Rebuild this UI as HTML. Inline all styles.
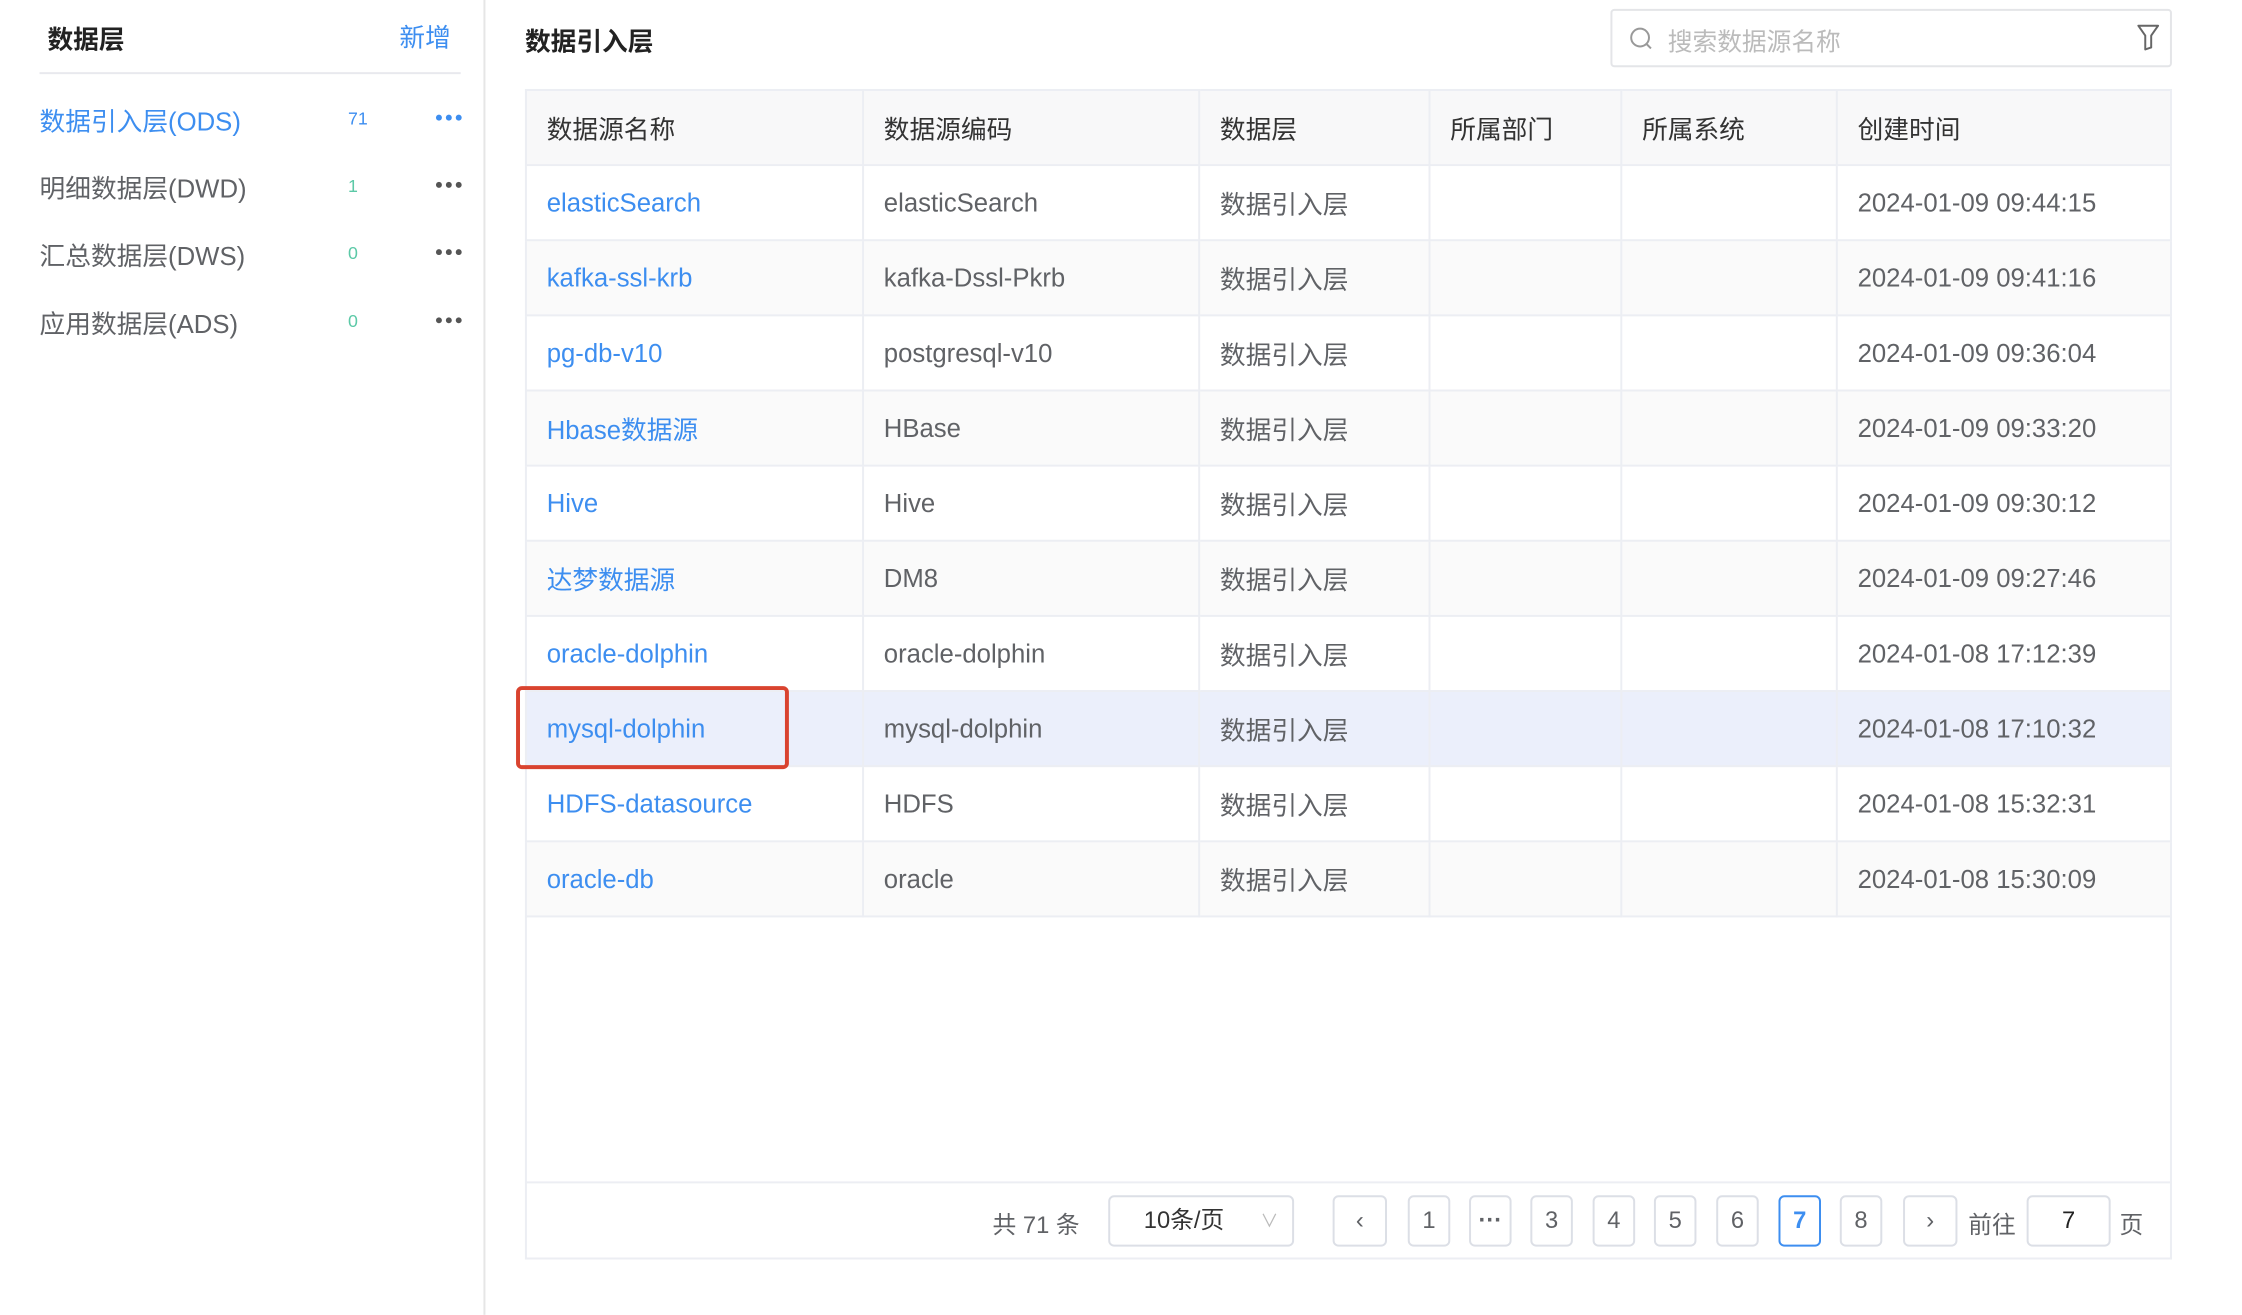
<!DOCTYPE html>
<html><head><meta charset="utf-8"><style>
*{box-sizing:border-box;margin:0;padding:0}
body{width:2242px;height:1310px;background:#fff;font-family:"Liberation Sans","Noto Sans CJK SC",sans-serif;position:relative;overflow:hidden;color:#606266}
#w{position:absolute;left:0;top:0;width:2268px;height:1330px;transform:scale(0.9886);transform-origin:0 0}
.abs{position:absolute}
.side-title{left:48px;top:20px;font-size:26px;font-weight:bold;color:#222}
.add{left:404px;top:18px;font-size:26px;color:#3d8ef0}
.sdiv{left:40px;top:73px;width:426px;height:2px;background:#e8e9ee}
.vdiv{left:489px;top:0;width:2px;height:1330px;background:#e6e6e6}
.item{left:40px;font-size:26px;color:#606266}
.cnt{left:352px;font-size:18px;color:#5cc9a7}
.dots{left:441px;width:26px;height:6px}
.dots i{position:absolute;top:0;width:6px;height:6px;border-radius:50%;background:#555}
.title{left:531px;top:22px;font-size:26px;font-weight:bold;color:#222}
.search{left:1629px;top:9px;width:568px;height:59px;border:2px solid #e4e5e8;border-radius:4px}
table{position:absolute;left:531px;top:90px;width:1666px;border-collapse:collapse;font-size:26px}
td,th{height:76px;border:2px solid #eceef3;padding-left:20px;text-align:left;font-weight:normal;white-space:nowrap}
th{background:#f8f8f9;color:#333}
tr.g td{background:#fafafa}
tr.h td{background:#ebeffb}
td a{color:#3d8ef0;text-decoration:none}
.frame{left:531px;top:926px;width:1666px;height:348px;border:2px solid #eceef3;border-top:none}
.pline{left:531px;top:1195px;width:1666px;height:2px;background:#eceef3}
.pb{top:1209px;height:52px;border:2px solid #dcdfe6;border-radius:6px;font-size:24px;color:#606266;text-align:center;line-height:48px}
.pt{top:1219px;font-size:24px;color:#606266}
</style></head><body><div id="w">
<div class="abs side-title">数据层</div>
<div class="abs add">新增</div>
<div class="abs sdiv"></div>
<div class="abs item" style="top:103px;color:#3d8ef0">数据引入层(ODS)</div>
<div class="abs cnt" style="top:110px;color:#3d8ef0">71</div>
<div class="abs dots" style="top:116px"><i style="left:0;background:#3d8ef0"></i><i style="left:10px;background:#3d8ef0"></i><i style="left:20px;background:#3d8ef0"></i></div>
<div class="abs item" style="top:171px">明细数据层(DWD)</div>
<div class="abs cnt" style="top:178px">1</div>
<div class="abs dots" style="top:184px"><i style="left:0"></i><i style="left:10px"></i><i style="left:20px"></i></div>
<div class="abs item" style="top:239px">汇总数据层(DWS)</div>
<div class="abs cnt" style="top:246px">0</div>
<div class="abs dots" style="top:252px"><i style="left:0"></i><i style="left:10px"></i><i style="left:20px"></i></div>
<div class="abs item" style="top:308px">应用数据层(ADS)</div>
<div class="abs cnt" style="top:315px">0</div>
<div class="abs dots" style="top:321px"><i style="left:0"></i><i style="left:10px"></i><i style="left:20px"></i></div>
<div class="abs vdiv"></div>

<div class="abs title">数据引入层</div>
<div class="abs search">
<svg class="abs" style="left:16px;top:16px" width="26" height="26" viewBox="0 0 26 26"><circle cx="12" cy="11" r="9" fill="none" stroke="#999" stroke-width="2"/><path d="M18 17l5 5" stroke="#999" stroke-width="2"/></svg>
<div class="abs" style="left:56px;top:12px;font-size:25px;color:#bbb">搜索数据源名称</div>
<svg class="abs" style="left:530px;top:12px" width="24" height="30" viewBox="0 0 24 30"><path d="M2 3h20l-7 10v12l-6 2V13z" fill="none" stroke="#666" stroke-width="2" stroke-linejoin="round"/></svg>
</div>

<table>
<tr><th style="width:341px">数据源名称</th><th style="width:340px">数据源编码</th><th style="width:233px">数据层</th><th style="width:194px">所属部门</th><th style="width:218px">所属系统</th><th>创建时间</th></tr>
<tr><td><a>elasticSearch</a></td><td>elasticSearch</td><td>数据引入层</td><td></td><td></td><td>2024-01-09 09:44:15</td></tr>
<tr class="g"><td><a>kafka-ssl-krb</a></td><td>kafka-Dssl-Pkrb</td><td>数据引入层</td><td></td><td></td><td>2024-01-09 09:41:16</td></tr>
<tr><td><a>pg-db-v10</a></td><td>postgresql-v10</td><td>数据引入层</td><td></td><td></td><td>2024-01-09 09:36:04</td></tr>
<tr class="g"><td><a>Hbase数据源</a></td><td>HBase</td><td>数据引入层</td><td></td><td></td><td>2024-01-09 09:33:20</td></tr>
<tr><td><a>Hive</a></td><td>Hive</td><td>数据引入层</td><td></td><td></td><td>2024-01-09 09:30:12</td></tr>
<tr class="g"><td><a>达梦数据源</a></td><td>DM8</td><td>数据引入层</td><td></td><td></td><td>2024-01-09 09:27:46</td></tr>
<tr><td><a>oracle-dolphin</a></td><td>oracle-dolphin</td><td>数据引入层</td><td></td><td></td><td>2024-01-08 17:12:39</td></tr>
<tr class="h"><td><a>mysql-dolphin</a></td><td>mysql-dolphin</td><td>数据引入层</td><td></td><td></td><td>2024-01-08 17:10:32</td></tr>
<tr><td><a>HDFS-datasource</a></td><td>HDFS</td><td>数据引入层</td><td></td><td></td><td>2024-01-08 15:32:31</td></tr>
<tr class="g"><td><a>oracle-db</a></td><td>oracle</td><td>数据引入层</td><td></td><td></td><td>2024-01-08 15:30:09</td></tr>
</table>
<div class="abs" style="left:522px;top:694px;width:276px;height:84px;border:4px solid #d9432f;border-radius:6px"></div>
<div class="abs frame"></div>
<div class="abs pline"></div>

<div class="abs pt" style="left:1004px">共 71 条</div>
<div class="abs pb" style="left:1121px;width:188px;text-align:left;padding-left:34px;color:#333">10条/页<span style="position:absolute;right:14px;top:0;color:#bbb;font-size:18px">∨</span></div>
<div class="abs pb" style="left:1348px;width:55px">&lsaquo;</div>
<div class="abs pb" style="left:1424px;width:43px">1</div>
<div class="abs pb" style="left:1486px;width:43px;font-weight:bold">···</div>
<div class="abs pb" style="left:1548px;width:43px">3</div>
<div class="abs pb" style="left:1611px;width:43px">4</div>
<div class="abs pb" style="left:1673px;width:43px">5</div>
<div class="abs pb" style="left:1736px;width:43px">6</div>
<div class="abs pb" style="left:1799px;width:43px;border-color:#3d8ef0;color:#3d8ef0;font-weight:bold">7</div>
<div class="abs pb" style="left:1861px;width:43px">8</div>
<div class="abs pb" style="left:1925px;width:55px">&rsaquo;</div>
<div class="abs pt" style="left:1991px">前往</div>
<div class="abs pb" style="left:2050px;width:85px;color:#222">7</div>
<div class="abs pt" style="left:2144px">页</div>
</div></body></html>
